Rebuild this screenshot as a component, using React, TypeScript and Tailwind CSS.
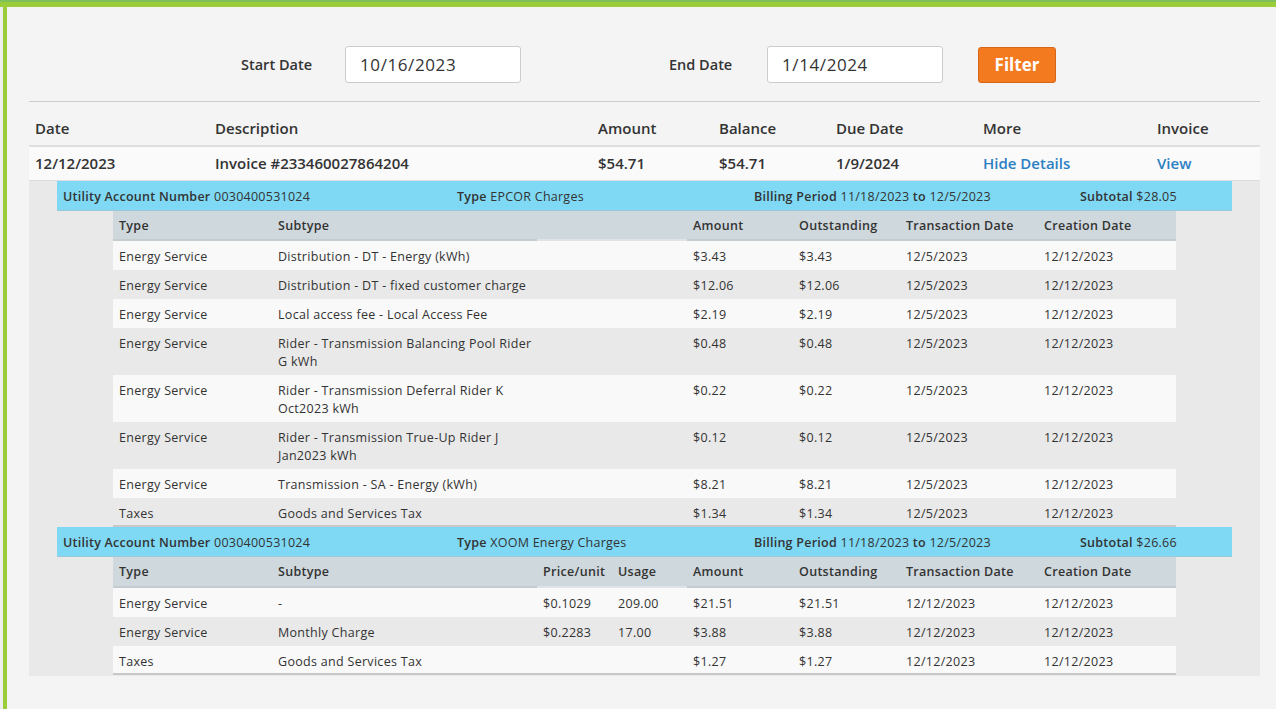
import React from "react";

type Row = [string, string, string, string, string, string, string, string];

const epcor: Row[] = [
  ["Energy Service", "Distribution - DT - Energy (kWh)", "", "", "$3.43", "$3.43", "12/5/2023", "12/12/2023"],
  ["Energy Service", "Distribution - DT - fixed customer charge", "", "", "$12.06", "$12.06", "12/5/2023", "12/12/2023"],
  ["Energy Service", "Local access fee - Local Access Fee", "", "", "$2.19", "$2.19", "12/5/2023", "12/12/2023"],
  ["Energy Service", "Rider - Transmission Balancing Pool Rider G kWh", "", "", "$0.48", "$0.48", "12/5/2023", "12/12/2023"],
  ["Energy Service", "Rider - Transmission Deferral Rider K Oct2023 kWh", "", "", "$0.22", "$0.22", "12/5/2023", "12/12/2023"],
  ["Energy Service", "Rider - Transmission True-Up Rider J Jan2023 kWh", "", "", "$0.12", "$0.12", "12/5/2023", "12/12/2023"],
  ["Energy Service", "Transmission - SA - Energy (kWh)", "", "", "$8.21", "$8.21", "12/5/2023", "12/12/2023"],
  ["Taxes", "Goods and Services Tax", "", "", "$1.34", "$1.34", "12/5/2023", "12/12/2023"],
];

const xoom: Row[] = [
  ["Energy Service", "-", "$0.1029", "209.00", "$21.51", "$21.51", "12/12/2023", "12/12/2023"],
  ["Energy Service", "Monthly Charge", "$0.2283", "17.00", "$3.88", "$3.88", "12/12/2023", "12/12/2023"],
  ["Taxes", "Goods and Services Tax", "", "", "$1.27", "$1.27", "12/12/2023", "12/12/2023"],
];

const innerGrid = "grid grid-cols-[159px_265px_75px_75px_106px_107px_138px_138px]";
const mainGrid = "grid grid-cols-[180px_383px_121px_117px_147px_174px_109px]";

function Bar({ type, subtotal }: { type: string; subtotal: string }) {
  return (
    <div className="mx-[28px] h-[30px] bg-[#7fd9f4] shadow-[inset_0_-1px_0_#9cc9d8] grid grid-cols-[394px_297px_326px_158px] items-center pt-[2px] text-[12.5px] text-[#333] tracking-[0.25px]">
      <div className="pl-[6px]">
        <span className="font-semibold">Utility Account Number</span> 0030400531024
      </div>
      <div className="pl-[6px]">
        <span className="font-semibold">Type</span> {type}
      </div>
      <div className="pl-[6px]">
        <span className="font-semibold">Billing Period</span> 11/18/2023 <span className="font-semibold">to</span> 12/5/2023
      </div>
      <div className="pl-[6px]">
        <span className="font-semibold">Subtotal</span> {subtotal}
      </div>
    </div>
  );
}

function Inner({ rows, showPrice }: { rows: Row[]; showPrice: boolean }) {
  const heads = ["Type", "Subtype", showPrice ? "Price/unit" : "", showPrice ? "Usage" : "", "Amount", "Outstanding", "Transaction Date", "Creation Date"];
  return (
    <div className="mx-[84px] text-[12.5px] text-[#333] tracking-[0.3px]">
      <div className={`${innerGrid} bg-[#cfd8dc] ${showPrice ? "h-[31px]" : "h-[30px]"} font-semibold`}>
        {heads.map((h, i) => (
          <div
            key={i}
            className={`pl-[6px] h-full flex items-center pt-[2px] border-b-2 ${
              i === 2 || i === 3 ? "border-[#dfe3e5]" : "border-[#c5ccd0]"
            }`}
          >
            {h}
          </div>
        ))}
      </div>
      {rows.map((r, ri) => (
        <div
          key={ri}
          className={`${innerGrid} ${ri % 2 === 0 ? "bg-[#f9f9f9]" : "bg-[#e9e9e9]"} ${
            ri === rows.length - 1 ? "shadow-[inset_0_-2px_0_#c8c8c8]" : ""
          }`}
        >
          {r.map((c, ci) => (
            <div key={ci} className="pl-[6px] pr-[2px] pt-[7px] pb-[4px] leading-[18px]">
              {c}
            </div>
          ))}
        </div>
      ))}
    </div>
  );
}

export default function App() {
  return (
    <div
      className="min-h-screen w-full bg-[#f4f4f4] flex flex-col"
      style={{ fontFamily: '"Open Sans", "Noto Sans", sans-serif' }}
    >
      <div className="h-[2px] bg-[#7ec15a]" />
      <div className="h-[5px] bg-[#9bcd3b]" />
      <div className="flex flex-1">
        <div className="w-[3px] bg-[#eeeeee]" />
        <div className="w-[4px] bg-[#9bcd3b]" />
        <div className="flex-1 pl-[22px] pr-[16px]">
          {/* filter row */}
          <div className="flex items-center pt-[39px] pb-[18px] pl-[212px]">
            <span className="w-[70px] whitespace-nowrap text-[14.5px] font-semibold text-[#333]">Start Date</span>
            <div className="ml-[34px] w-[176px] h-[37px] bg-white border border-[#cccccc] rounded-[3px] flex items-center pl-[14px] text-[17px] text-[#333] tracking-[0.6px]">
              10/16/2023
            </div>
            <span className="ml-[148px] w-[64px] whitespace-nowrap text-[14.5px] font-semibold text-[#333]">End Date</span>
            <div className="ml-[34px] w-[176px] h-[37px] bg-white border border-[#cccccc] rounded-[3px] flex items-center pl-[14px] text-[17px] text-[#333] tracking-[0.6px]">
              1/14/2024
            </div>
            <button className="ml-[35px] w-[78px] h-[36px] bg-[#f47a20] border border-[#d8661a] rounded-[3px] text-white font-bold text-[17px]">
              Filter
            </button>
          </div>
          <div className="h-[1px] bg-[#cccccc]" />
          {/* header */}
          <div className={`${mainGrid} pt-[16px] pb-[7px] border-b-2 border-[#dedede] text-[15px] font-semibold text-[#333]`}>
            {["Date", "Description", "Amount", "Balance", "Due Date", "More", "Invoice"].map((h) => (
              <div key={h} className="pl-[6px] leading-[20px]">{h}</div>
            ))}
          </div>
          <div className={`${mainGrid} h-[34px] items-center bg-[#fafafa] border-b border-[#dddddd] text-[15px] font-semibold text-[#333]`}>
            <div className="pl-[6px]">12/12/2023</div>
            <div className="pl-[6px]">Invoice #233460027864204</div>
            <div className="pl-[6px]">$54.71</div>
            <div className="pl-[6px]">$54.71</div>
            <div className="pl-[6px]">1/9/2024</div>
            <div className="pl-[6px] text-[#2b80c2]">Hide Details</div>
            <div className="pl-[6px] text-[#2b80c2]">View</div>
          </div>
          {/* details */}
          <div className="bg-[#e9e9e9] pb-[1px]">
            <Bar type="EPCOR Charges" subtotal="$28.05" />
            <Inner rows={epcor} showPrice={false} />
            <Bar type="XOOM Energy Charges" subtotal="$26.66" />
            <Inner rows={xoom} showPrice={true} />
          </div>
        </div>
      </div>
    </div>
  );
}
